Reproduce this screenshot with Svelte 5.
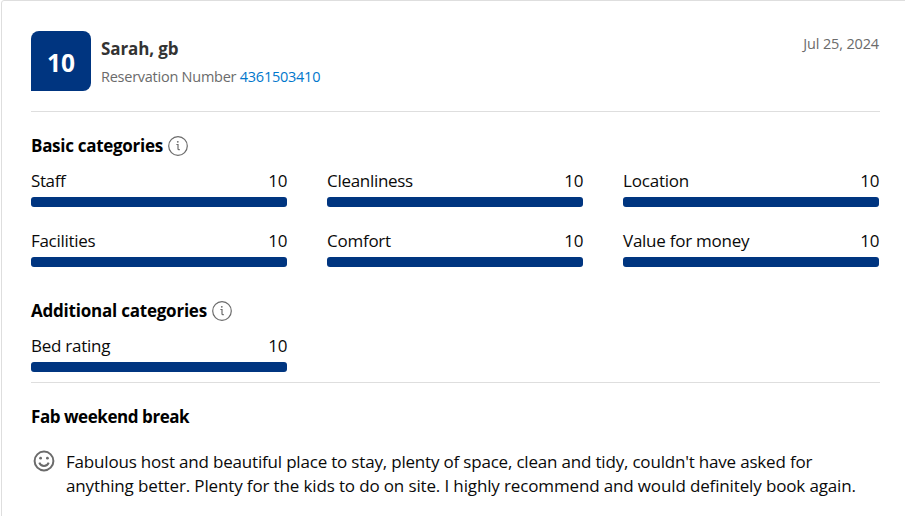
<script lang="ts">
  const basic = [
    { label: 'Staff', score: 10, spacing: -0.4 },
    { label: 'Cleanliness', score: 10, spacing: -0.3 },
    { label: 'Location', score: 10, spacing: -0.2 },
    { label: 'Facilities', score: 10, spacing: -0.3 },
    { label: 'Comfort', score: 10, spacing: -0.25 },
    { label: 'Value for money', score: 10, spacing: -0.25 },
  ];
  const additional = [{ label: 'Bed rating', score: 10, spacing: -0.25 }];
</script>

{#snippet info()}
  <svg class="info" viewBox="0 0 20 20" aria-hidden="true">
    <circle cx="10" cy="10" r="9.3" />
    <path d="M8.4 8.5h1.6v4.2q0 1 .9 1h.9" />
    <circle class="dot" cx="9.8" cy="5.8" r=".9" />
  </svg>
{/snippet}

{#snippet scores(items)}
  <div class="scores">
    {#each items as item}
      <div class="score">
        <div class="line">
          <span style="letter-spacing: {item.spacing}px">{item.label}</span>
          <span class="value">{item.score}</span>
        </div>
        <div class="track">
          <div class="fill" style="width: {item.score * 10}%"></div>
        </div>
      </div>
    {/each}
  </div>
{/snippet}

<article class="review">
  <header>
    <div class="badge">10</div>
    <div class="guest">
      <div class="name">Sarah, gb</div>
      <div class="reservation">Reservation Number <span class="link">4361503410</span></div>
    </div>
    <time>Jul 25, 2024</time>
  </header>

  <section class="basic">
    <h2><span class="basic-title">Basic categories</span>{@render info()}</h2>
    {@render scores(basic)}
  </section>

  <section class="additional">
    <h2><span class="additional-title">Additional categories</span>{@render info()}</h2>
    {@render scores(additional)}
  </section>

  <section class="text">
    <h3>Fab weekend break</h3>
    <div class="comment">
      <svg class="smile" viewBox="0 0 22 22" aria-hidden="true">
        <circle cx="11" cy="11" r="9.4" />
        <path d="M6.3 12.6q1.3 3.4 4.7 3.4t4.7-3.4" />
        <circle class="dot" cx="7.6" cy="8.2" r="1.4" />
        <circle class="dot" cx="14.4" cy="8.2" r="1.4" />
      </svg>
      <p>
        <span class="first">Fabulous host and beautiful place to stay, plenty of space, clean and tidy, couldn't have asked for</span><br />
        <span class="second">anything better. Plenty for the kids to do on site. I highly recommend and would definitely book again.</span>
      </p>
    </div>
  </section>
</article>

<style>
  :global(body) {
    margin: 0;
    background: #fff;
    overflow: hidden;
  }
  .review {
    box-sizing: border-box;
    width: 910px;
    height: 530px;
    margin-left: 1px;
    padding: 30px 30px 0 29px;
    border: 1px solid #dedede;
    border-radius: 3px;
    font-family: "Open Sans", "Noto Sans", sans-serif;
    font-size: 17px;
    line-height: 24px;
    color: #0a0a0a;
    white-space: nowrap;
  }
  header {
    box-sizing: border-box;
    display: flex;
    width: 849px;
    height: 81px;
    border-bottom: 1px solid #dedede;
  }
  .badge {
    width: 60px;
    height: 60px;
    border-radius: 8px 8px 8px 0;
    background: #003580;
    color: #fff;
    font-size: 24.5px;
    font-weight: 700;
    line-height: 64px;
    text-align: center;
  }
  .guest {
    flex: 1;
    padding: 6px 0 0 10px;
  }
  .name {
    color: #333;
    font-weight: 700;
    letter-spacing: -0.1px;
  }
  .reservation {
    margin-top: 4px;
    color: #6b6b6b;
    font-size: 14.5px;
    letter-spacing: -0.25px;
  }
  .link {
    color: #0077cc;
  }
  time {
    padding: 1px 1px 0 0;
    color: #6b6b6b;
    font-size: 14.5px;
    letter-spacing: -0.15px;
  }
  h2,
  h3 {
    display: flex;
    align-items: center;
    margin: 0;
    color: #000;
    font-size: 17px;
    font-weight: 700;
    line-height: 24px;
    letter-spacing: -0.44px;
  }
  .basic-title {
    letter-spacing: -0.29px;
  }
  .additional-title {
    letter-spacing: -0.22px;
  }
  .info {
    width: 20px;
    height: 20px;
    margin-left: 5px;
    fill: none;
    stroke: #6b6b6b;
    stroke-width: 1.2;
  }
  .dot {
    fill: #6b6b6b;
    stroke: none;
  }
  .basic {
    padding-top: 22px;
  }
  .additional {
    box-sizing: border-box;
    width: 849px;
    height: 116px;
    padding-top: 32px;
    border-bottom: 1px solid #dedede;
  }
  .scores {
    display: grid;
    grid-template-columns: repeat(3, 256px);
    gap: 22px 40px;
    padding-top: 11px;
  }
  .line {
    display: flex;
    justify-content: space-between;
    height: 28px;
  }
  .value {
    letter-spacing: -0.4px;
  }
  .track {
    height: 10px;
    border-radius: 3px;
    overflow: hidden;
    background: #e6e6e6;
  }
  .fill {
    height: 100%;
    background: #003580;
  }
  .text {
    padding-top: 22px;
  }
  .comment {
    display: flex;
    gap: 11px;
    padding: 21px 0 0 2px;
  }
  .smile {
    width: 22px;
    height: 22px;
    fill: none;
    stroke: #6b6b6b;
    stroke-width: 2;
  }
  p {
    margin: 0;
  }
  .first {
    letter-spacing: -0.19px;
  }
  .second {
    letter-spacing: -0.14px;
  }
</style>
